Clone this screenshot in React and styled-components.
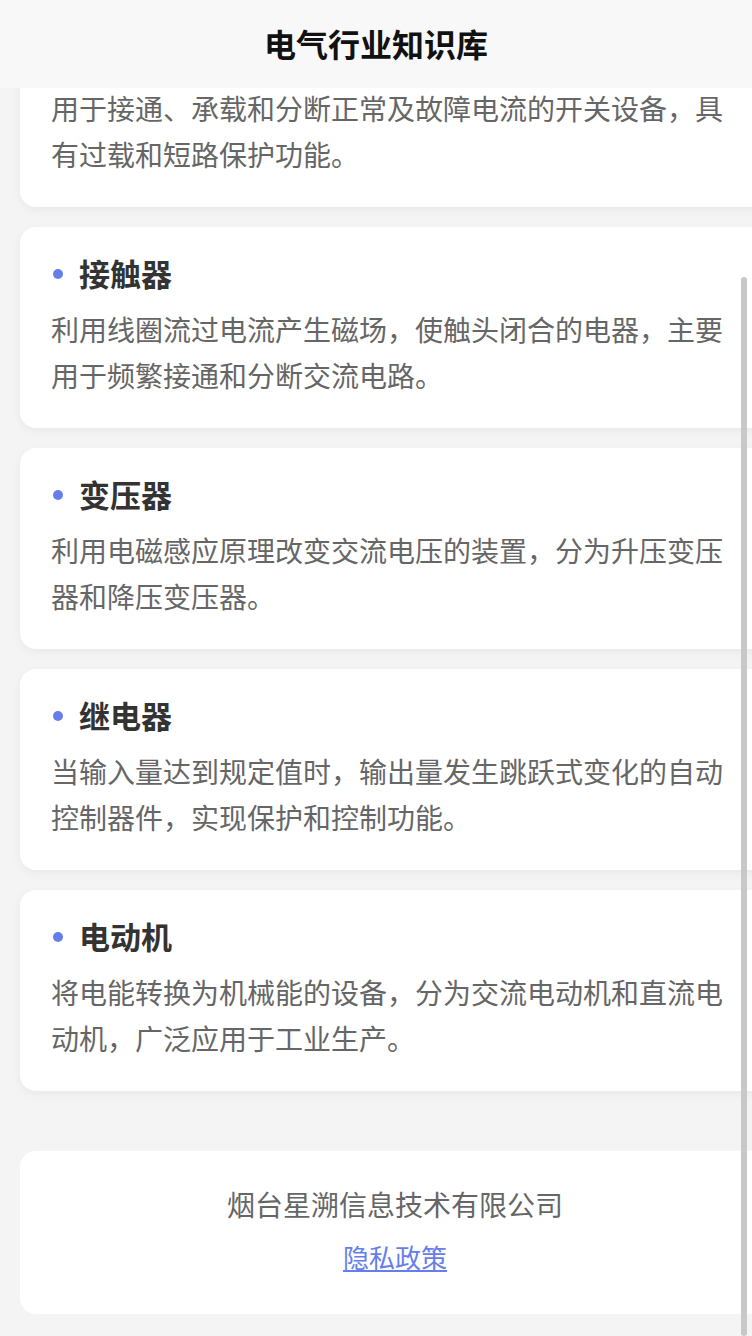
import React from "react"
import styled, { createGlobalStyle } from "styled-components"

const items = [
  {
    title: "断路器",
    desc: "用于接通、承载和分断正常及故障电流的开关设备，具有过载和短路保护功能。",
  },
  {
    title: "接触器",
    desc: "利用线圈流过电流产生磁场，使触头闭合的电器，主要用于频繁接通和分断交流电路。",
  },
  {
    title: "变压器",
    desc: "利用电磁感应原理改变交流电压的装置，分为升压变压器和降压变压器。",
  },
  {
    title: "继电器",
    desc: "当输入量达到规定值时，输出量发生跳跃式变化的自动控制器件，实现保护和控制功能。",
  },
  {
    title: "电动机",
    desc: "将电能转换为机械能的设备，分为交流电动机和直流电动机，广泛应用于工业生产。",
  },
]

export default function App() {
  return (
    <>
      <GlobalStyle />
      <Screen>
        <Header>
          <HeaderTitle>电气行业知识库</HeaderTitle>
        </Header>
        <ScrollArea>
          <List>
            {items.map((item) => (
              <Card key={item.title}>
                <CardTitle>
                  <Dot />
                  {item.title}
                </CardTitle>
                <CardDesc>{item.desc}</CardDesc>
              </Card>
            ))}
            <Footer>
              <Company>烟台星溯信息技术有限公司</Company>
              <PolicyLink href="#">隐私政策</PolicyLink>
            </Footer>
          </List>
          <ScrollThumb />
        </ScrollArea>
      </Screen>
    </>
  )
}

const GlobalStyle = createGlobalStyle`
  html, body {
    margin: 0;
    padding: 0;
    background: #f4f4f4;
    overflow: hidden;
  }
  body {
    font-family: "Noto Sans CJK SC", "Liberation Sans", sans-serif;
  }
`

const Screen = styled.div`
  display: flex;
  flex-direction: column;
  height: 100vh;
  overflow: hidden;
`

const Header = styled.header`
  flex-shrink: 0;
  height: 88px;
  display: flex;
  align-items: center;
  justify-content: center;
  background: #f8f8f8;
  position: relative;
  z-index: 2;
`

const HeaderTitle = styled.h1`
  margin: -3px 0 0;
  font-size: 32px;
  font-weight: 600;
  color: #111;
  line-height: 1;
`

const ScrollArea = styled.main`
  flex: 1;
  position: relative;
  overflow: hidden;
  display: flex;
  flex-direction: column;
  justify-content: flex-end;
`

const List = styled.div`
  display: flex;
  flex-direction: column;
  gap: 20px;
  padding: 0 0 22px 20px;
  width: 750px;
  flex-shrink: 0;
`

const Card = styled.section`
  background: #fff;
  border-radius: 16px;
  box-shadow: 0 3px 10px rgba(0, 0, 0, 0.05);
  padding: 28px 31px 30px;
  width: 750px;
  box-sizing: border-box;
`

const CardTitle = styled.h2`
  margin: 0;
  display: flex;
  align-items: center;
  font-size: 31px;
  line-height: 36px;
  font-weight: 600;
  color: #333;
`

const Dot = styled.span`
  width: 10px;
  height: 10px;
  border-radius: 50%;
  background: #667eea;
  margin: 2px 16px 0 2px;
  flex-shrink: 0;
`

const CardDesc = styled.p`
  margin: 15px 0 0;
  font-size: 28px;
  line-height: 46px;
  color: #666;
`

const Footer = styled.footer`
  margin-top: 40px;
  background: #fff;
  border-radius: 16px;
  width: 750px;
  box-sizing: border-box;
  padding: 38px 0 42px;
  display: flex;
  flex-direction: column;
  align-items: center;
  gap: 23px;
`

const Company = styled.div`
  font-size: 28px;
  line-height: 30px;
  color: #666;
`

const PolicyLink = styled.a`
  font-size: 26px;
  line-height: 30px;
  color: #667eea;
  text-decoration: underline;
`

const ScrollThumb = styled.div`
  position: absolute;
  right: 5px;
  top: 189px;
  bottom: 0;
  width: 6px;
  border-radius: 3px;
  background: #c8c8c8;
`
